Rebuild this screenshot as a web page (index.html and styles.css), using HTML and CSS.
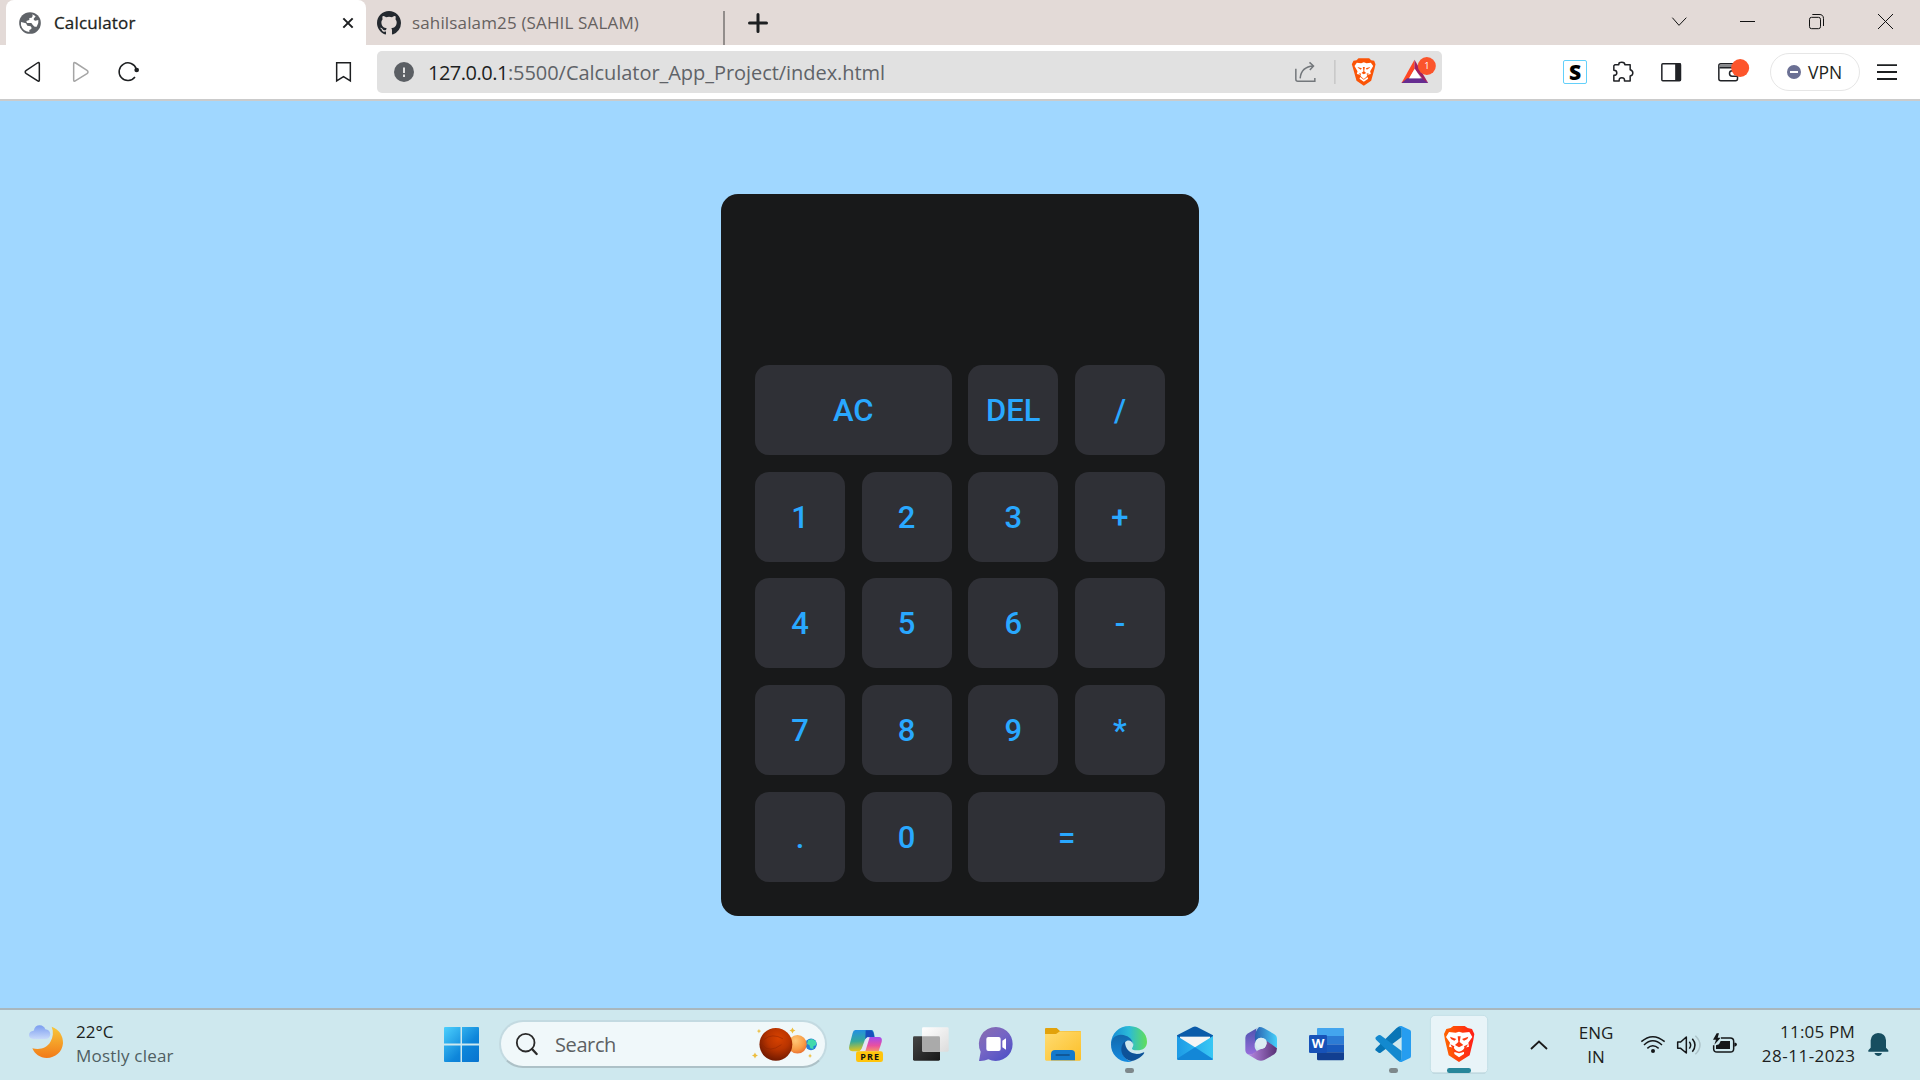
FILE: index.html
```html
<!DOCTYPE html>
<html lang="en">
<head>
<meta charset="utf-8">
<title>Calculator</title>
<link rel="stylesheet" href="styles.css">
</head>
<body>
<header class="tabs">
  <div class="tab active">
    <svg class="favicon" viewBox="57 36 66 66"><circle cx="90" cy="69" r="32.500" fill="#5f6368"/><path d="M63 66 78 70 82 77 92 79Q96 82 94 87L88 90V96Q68 94 63 76ZM97 43Q100 48 95 53L88 54V60L79 63 81 69 94 69 99 76 104 80 110 80Q117 71 115 60L106 62Q100 61 101 56L107 49Z" fill="#fff"/></svg>
    <span class="tab-title">Calculator</span>
    <svg class="tab-close" viewBox="1026 50 36 36"><path d="M1030 54 1058 82M1058 54 1030 82" stroke="#1d1f21" stroke-width="6"/></svg>
  </div>
  <div class="tab idle">
    <svg class="github" viewBox="0 0 16 16"><path fill="#24292f" d="M8 0C3.580 0 0 3.580 0 8c0 3.540 2.290 6.530 5.470 7.590.4.070.55-.17.55-.38 0-.19-.01-.82-.01-1.490-2.010.37-2.530-.49-2.690-.94-.09-.23-.48-.94-.82-1.130-.28-.15-.68-.52-.01-.53.63-.01 1.080.58 1.230.82.72 1.210 1.870.87 2.330.66.07-.52.28-.87.51-1.070-1.780-.2-3.640-.89-3.640-3.950 0-.87.31-1.590.82-2.150-.08-.2-.36-1.020.08-2.120 0 0 .67-.21 2.200.82a7.600 7.600 0 0 1 4 0c1.530-1.040 2.200-.82 2.200-.82.44 1.100.16 1.920.08 2.120.51.56.82 1.270.82 2.150 0 3.070-1.870 3.750-3.650 3.950.29.25.54.73.54 1.480 0 1.070-.01 1.930-.01 2.200 0 .21.15.46.55.38A8 8 0 0 0 16 8c0-4.420-3.580-8-8-8Z"/></svg>
    <span class="tab-title">sahilsalam25 (SAHIL SALAM)</span>
  </div>
  <svg class="plus" viewBox="0 0 20 20"><path d="M10 1.500V18.500M1.500 10H18.500" stroke="#1d1f21" stroke-width="3" stroke-linecap="round"/></svg>
  <svg class="window-controls" viewBox="393 0 747 135" fill="none" stroke="#111" stroke-width="3"><path d="M397 53 417 76 439 53M600 64.500H645M1014 42 1059 87M1059 42 1014 87"/><rect x="808.500" y="52" width="33" height="34" rx="6"/><path d="M817 43.500H837Q850.500 43 850.500 56V78"/></svg>
</header>
<nav class="toolbar">
  <svg class="nav-buttons" viewBox="66 135 360 162" fill="none" stroke="#1d1f21" stroke-width="4.500" stroke-linejoin="round"><path d="M118 191V240Q118 246 112 242L79 221Q72 216 79 211L112 189Q118 185 118 191Z"/><path d="M221 191V240Q221 246 227 242L261 221Q267 216 261 211L227 189Q221 185 221 191Z" stroke="#a5a5a5"/><path d="M405 231A26.500 26.500 0 1 1 409 207"/><circle cx="410" cy="210" r="7" fill="#1d1f21" stroke="none"/></svg>
  <svg class="bookmark" viewBox="1005 183 51 66"><path d="M1010 188H1051V243L1030.500 230 1010 243Z" fill="none" stroke="#1d1f21" stroke-width="4.500"/></svg>
  <div class="address">
    <svg class="info" viewBox="0 0 20 20"><circle cx="10" cy="10" r="10" fill="#5b5f64"/><path d="M10 5.500V11M10 12.500V15" stroke="#e1e1e1" stroke-width="2"/></svg>
    <span class="url"><b>127.0.0.1</b>:5500/Calculator_App_Project/index.html</span>
    <svg class="address-icons" viewBox="160 135 440 162">
      <path d="M168 206V238Q168 244 174 244H225V234M181 235Q184 200 221 198M209 187 221 198 210 210" fill="none" stroke="#73777b" stroke-width="4.500"/>
      <path d="M285 180V252" stroke="#c9c9c9" stroke-width="5"/>
      <path d="M350 181 356 175H388L394 181 403 182 407 193 404 206 394 242 372 257 350 242 340 206 336 193 341 182Z" fill="#fb5407"/>
      <path d="M351 188 364 190 372 187 380 190 393 188 400 198 391 214 393 222 383 224 380 230 372 237 364 230 361 224 351 222 353 214 344 198ZM372 239 383 231 385 236 372 245 359 236 361 231Z" fill="#fff"/>
      <path d="M353 201 366 205 363 209 355 204ZM391 201 378 205 381 209 389 204ZM369 201H375L373 214 379 219 372 223 365 219 371 214ZM357 219 364 221 362 226ZM387 219 380 221 382 226Z" fill="#fb5407"/>
      <path d="M524 179 485 249H500L524 207Z" fill="#ff4724"/><path d="M485 249H565L550 235H502Z" fill="#662d91"/><path d="M524 179 565 249 548 237 524 207Z" fill="#9e1f63"/><path d="M525 206 508 235H542Z" fill="#fff"/>
      <circle cx="561" cy="198" r="27" fill="#fb542b"/><text x="561" y="208" text-anchor="middle" font-size="28" fill="#fff" font-family="Open Sans, sans-serif">1</text>
    </svg>
  </div>
  <span class="extension">S</span>
  <svg class="extension-icons" viewBox="210 135 425 162" fill="none" stroke="#202226" stroke-width="4.500">
    <path d="M224 194H236V192Q236 187 245 187 254 187 254 194H270V209Q278 211 278 219 278 226 270 228V243H253Q254 233 245 233 236 233 237 243H221V226Q230 226 230 219 230 211 221 211V197Z" stroke-linejoin="round"/>
    <rect x="365" y="191" width="56" height="51" rx="3"/><path d="M405 190H422V243H405Z" fill="#202226" stroke="none"/>
    <rect x="536" y="191" width="56" height="51" rx="6"/><path d="M538 194H580V203H538Z" fill="#85878a" stroke="none"/><path d="M538 203H590M592 212H576Q568 212 568 220 568 229 576 229H592"/><circle cx="600" cy="204" r="27" fill="#fd552b" stroke="none"/>
  </svg>
  <div class="vpn"><svg viewBox="0 0 14 14"><circle cx="7" cy="7" r="7" fill="#6b7094"/><path d="M3 7H11" stroke="#fff" stroke-width="2"/></svg><span>VPN</span></div>
  <svg class="hamburger" viewBox="0 0 20 16"><path d="M0 1.200H20M0 8H20M0 15H20" stroke="#1d1f21" stroke-width="1.800"/></svg>
</nav>
<main class="page">
  <section class="calculator">
    <div class="display"></div>
    <div class="keys">
      <button class="wide">AC</button><button>DEL</button><button>/</button>
      <button>1</button><button>2</button><button>3</button><button>+</button>
      <button>4</button><button>5</button><button>6</button><button>-</button>
      <button>7</button><button>8</button><button>9</button><button>*</button>
      <button>.</button><button>0</button><button class="wide">=</button>
    </div>
  </section>
</main>
<footer class="taskbar">
  <svg class="weather-icon" viewBox="84 69 108 108">
    <defs><linearGradient id="moon" x2="0" y2="1"><stop stop-color="#f8c83a"/><stop offset="1" stop-color="#f27a18"/></linearGradient><linearGradient id="cloud" x2="0" y2="1"><stop stop-color="#7b9df0"/><stop offset="1" stop-color="#c8dafa"/></linearGradient></defs>
    <path d="M155 80C178 88 190 108 189 130 187 156 166 174 140 174 120 174 104 162 97 145 120 150 140 145 151 126 160 111 161 95 155 80Z" fill="url(#moon)"/><path d="M100 117Q87 116 87 105 88 93 101 92 105 76 119 76 132 77 136 88 150 89 151 103 150 117 136 117Z" fill="url(#cloud)"/>
  </svg>
  <div class="weather"><span class="temp">22°C</span><span class="sky">Mostly clear</span></div>
  <svg class="start" viewBox="0 0 35 35"><defs><linearGradient id="win" gradientUnits="userSpaceOnUse" x2="35" y2="35"><stop stop-color="#4cd0fd"/><stop offset=".6" stop-color="#0e86da"/><stop offset="1" stop-color="#0873cf"/></linearGradient></defs><path d="M1 0H16.500V16.500H0V1Q0 0 1 0ZM18 0H34Q35 0 35 1V16.500H18ZM0 18.500H16.500V35H1Q0 35 0 34ZM18 18.500H35V34Q35 35 34 35H18Z" fill="url(#win)"/></svg>
  <div class="search">
    <svg class="lens" viewBox="288 96 72 72" fill="none" stroke="#2a2a2a"><circle cx="320" cy="128" r="26.500" stroke-width="5.500"/><path d="M339 147 353 162" stroke-width="7" stroke-linecap="round"/></svg>
    <span>Search</span>
    <svg class="planets" viewBox="996 78 202 108">
      <defs><radialGradient id="mars" cx=".58" cy=".32" r=".75"><stop stop-color="#d84200"/><stop offset=".45" stop-color="#b93400"/><stop offset="1" stop-color="#651500"/></radialGradient><radialGradient id="venus" cx=".4" cy=".3" r=".8"><stop stop-color="#ffc877"/><stop offset=".6" stop-color="#f89c45"/><stop offset="1" stop-color="#e5622a"/></radialGradient></defs>
      <circle cx="1177" cy="133" r="17.500" fill="#237fd6"/><path d="M1168 121 1180 117 1192 124 1193 135 1184 139 1184 147 1175 145 1172 135 1165 132Z" fill="#42d9ac"/><circle cx="1136" cy="133" r="28" fill="url(#venus)"/><circle cx="1071" cy="133" r="49.500" fill="url(#mars)"/><path d="M1036 118Q1060 98 1092 116M1032 136Q1050 160 1088 134" fill="none" stroke="#8f2500" stroke-width="3" opacity=".5"/>
      <path d="M1020 86 1022 91 1027 93 1022 95 1020 100 1018 95 1013 93 1018 91ZM1121 82 1124 88 1130 91 1124 94 1121 100 1118 94 1112 91 1118 88ZM1008 158 1011 164 1017 167 1011 170 1008 176 1005 170 999 167 1005 164ZM1174 161 1176 166 1180 168 1176 170 1174 174 1172 170 1168 168 1172 166Z" fill="#edbd3d"/>
    </svg>
  </div>
  <div class="apps">
    <svg viewBox="9 30 198 210"><defs><linearGradient id="cp1" x2=".1" y2="1"><stop stop-color="#218de7"/><stop offset=".55" stop-color="#35a99c"/><stop offset="1" stop-color="#e3c61b"/></linearGradient><linearGradient id="cp2" x2="0" y2="1"><stop stop-color="#a34af0"/><stop offset=".6" stop-color="#e950a0"/><stop offset="1" stop-color="#f79368"/></linearGradient></defs><path d="M76 90H126Q132 91 134 112H116Q107 112 104 121L95 146Q92 154 83 154H67Q54 152 58 137L68 99Q70 90 76 90Z" fill="url(#cp1)"/><path d="M107 91H124Q131 94 133 112H116Q109 112 106 117Z" fill="#174fbd"/><path d="M117 111H148Q158 113 155 126L146 154H98Z" fill="url(#cp2)"/><path d="M111 112H119L106 154H88Q94 151 97 143Z" fill="#e6e4f4"/><rect x="78" y="154" width="81" height="32" rx="7" fill="#ffc40b"/><text x="119" y="180" text-anchor="middle" font-size="27" font-weight="700" fill="#111" textLength="57" font-family="Open Sans, sans-serif">PRE</text></svg>
    <svg viewBox="207 30 198 210"><defs><linearGradient id="tv" x2="1" y2="1"><stop stop-color="#454545"/><stop offset="1" stop-color="#171717"/></linearGradient><linearGradient id="tv2" x2="1" y2="1"><stop stop-color="#fff"/><stop offset="1" stop-color="#dcdcdc"/></linearGradient></defs><rect x="249" y="109" width="81" height="73" rx="4" fill="url(#tv)"/><rect x="276" y="82" width="80" height="73" rx="4" fill="url(#tv2)"/><path d="M276 109H326Q330 109 330 113V155H280Q276 155 276 151Z" fill="#aaa"/></svg>
    <svg viewBox="405 30 198 210"><defs><linearGradient id="chat" x2=".8" y2="1"><stop stop-color="#8a6dae"/><stop offset=".5" stop-color="#7565c4"/><stop offset="1" stop-color="#4e50c6"/></linearGradient></defs><path d="M498 81A51 51 0 1 1 475 178Q462 184 447 183L452 155A51 51 0 0 1 498 81Z" fill="url(#chat)"/><rect x="469" y="111" width="43" height="42" rx="6" fill="#fff"/><path d="M517 122 528 115V149L517 142Z" fill="#fff"/></svg>
    <svg viewBox="603 30 198 210"><defs><linearGradient id="folder" x2="1" y2="1"><stop stop-color="#ffdc72"/><stop offset="1" stop-color="#fcbf28"/></linearGradient></defs><path d="M648 84H680L690 93H749Q753 93 753 97V112H645V87Q645 84 648 84Z" fill="#e2a20b"/><path d="M645 102H678L690 94H753V178Q753 182 749 182H649Q645 182 645 178Z" fill="url(#folder)"/><path d="M663 181V161Q664 150 675 150H724Q735 150 735 161V181Z" fill="#1479cb"/><path d="M677 165H719" stroke="#10528e" stroke-width="5"/></svg>
    <svg viewBox="801 30 198 210"><defs><linearGradient id="e1"><stop stop-color="#168bd6"/><stop offset=".5" stop-color="#2bbbd7"/><stop offset="1" stop-color="#62de58"/></linearGradient><linearGradient id="e2" x2="0" y2="1"><stop stop-color="#1268ac"/><stop offset="1" stop-color="#148be0"/></linearGradient></defs><path d="M843 132C844 99 867 78 898 78 928 79 951 99 951 125 951 142 939 151 922 151 911 151 903 148 907 143 915 133 907 118 890 117Q857 113 843 132Z" fill="url(#e1)"/><path d="M843 133C845 108 867 98 889 108 901 112 909 123 908 133 907 123 894 116 884 128 866 152 884 183 908 184 872 193 842 166 843 133Z" fill="url(#e2)"/><path d="M885 124C864 142 875 178 903 183 921 181 937 169 943 158Q942 156 938 158C913 169 884 155 885 124Z" fill="#0d5298"/><rect x="885" y="204" width="27" height="15" rx="7" fill="#7e888b"/></svg>
    <svg viewBox="9 30 198 210"><defs><linearGradient id="mail"><stop stop-color="#1d9be6"/><stop offset="1" stop-color="#39c7f4"/></linearGradient></defs><path d="M51 106 99 81Q105 78 111 81L159 106V140H51Z" fill="#0b5ba9"/><path d="M60 110H150V145H60Z" fill="#f5f5f5"/><path d="M51 108 105 142 159 108V176Q159 180 155 180H55Q51 180 51 176Z" fill="url(#mail)"/><path d="M105 142 159 177Q158 180 155 180H55L51 176Z" fill="#1387d7"/></svg>
    <svg viewBox="207 30 198 210"><defs><linearGradient id="m1" x2="0" y2="1"><stop stop-color="#4a52ad"/><stop offset="1" stop-color="#986edb"/></linearGradient><linearGradient id="m2"><stop stop-color="#2a5eae"/><stop offset="1" stop-color="#46d0fb"/></linearGradient><linearGradient id="m3"><stop stop-color="#b98ae5"/><stop offset="1" stop-color="#573075"/></linearGradient></defs><path d="M297 81 262 101Q256 105 256 113V151Q257 163 268 164 278 166 291 154 279 143 287 121L289 86Z" fill="url(#m1)"/><path d="M297 81Q303 80 312 85L342 102Q351 107 351 117V144L321 129Q321 114 303 113 288 115 287 130 279 100 297 81Z" fill="url(#m2)"/><path d="M320 123 351 145Q351 157 343 163L313 180Q303 185 292 180L263 163Q273 167 290 153L303 147Q320 146 320 123Z" fill="url(#m3)"/><circle cx="303" cy="130" r="17" fill="#dcedf3"/></svg>
    <svg viewBox="405 30 198 210"><path d="M474 84H549Q552 84 552 88V109H471V87Q471 84 474 84Z" fill="#43a5ee"/><path d="M471 108H552V133H471Z" fill="#2c7bd4"/><path d="M471 133H552V157H471Z" fill="#185abd"/><path d="M471 157H552V177Q552 181 548 181H475Q471 181 471 177Z" fill="#123f91"/><rect x="447" y="105" width="54" height="54" rx="4" fill="#1752b8"/><text x="474" y="145" text-anchor="middle" font-size="37" font-weight="700" fill="#fff" textLength="38" lengthAdjust="spacingAndGlyphs" font-family="Open Sans, sans-serif">W</text></svg>
    <svg viewBox="603 30 198 210"><path d="M648 145 709 85Q716 78 725 79V111L662 158Q657 160 653 156L646 151Q645 148 648 145Z" fill="#0875b6"/><path d="M648 119 709 178Q716 186 725 186V153L662 106Q657 103 653 107L647 112Q645 116 648 119Z" fill="#1389cf"/><path d="M716 81Q720 77 726 79L750 90Q753 92 753 96V168Q753 173 750 174L726 185Q720 187 716 183 725 181 725 171V93Q725 83 716 81Z" fill="#269df0"/><rect x="687" y="204" width="27" height="15" rx="7" fill="#7e888b"/></svg>
    <svg viewBox="801 30 198 210"><defs><linearGradient id="lion"><stop stop-color="#ff6500"/><stop offset="1" stop-color="#ff1e18"/></linearGradient></defs><rect x="811" y="46" width="172" height="174" rx="14" fill="#e8f4f8" stroke="#c3dfe6" stroke-width="3"/><path d="M818 219H976" stroke="#b9d2d9" stroke-width="3"/><path d="M872 84 880 78H914L923 84 936 87 943 102 940 120 929 166 897 186 866 166 855 120 852 102 859 87Z" fill="url(#lion)"/><path d="M867 96 887 98 897 95 908 98 928 96 937 111 925 128 927 140 914 143 908 151 897 158 887 151 881 143 867 140 870 128 858 111ZM897 151 912 156V162L897 172 883 162V156Z" fill="#fff"/><path d="M870 110 889 117 883 122 873 117ZM925 110 906 117 912 122 922 117ZM893 109H902L899 126 910 135 897 142 885 135 895 126ZM871 133 883 139 880 149ZM924 133 912 139 915 149ZM881 149 897 155 914 149V155L897 160 881 155Z" fill="#fd3b12"/><rect x="861" y="204" width="72" height="15" rx="7" fill="#27869a"/></svg>
  </div>
  <svg class="chevron" viewBox="0 0 18 10"><path d="M1 9 9 1.500 17 9" fill="none" stroke="#1a1a1a" stroke-width="1.800"/></svg>
  <div class="language"><span>ENG</span><span>IN</span></div>
  <svg class="status" viewBox="450 90 294 78" fill="none" stroke="#141719" stroke-width="4.500">
    <path d="M454 122Q488 92 524 122M462 132Q488 107 516 132M472 142Q488 127 506 142"/><circle cx="489" cy="150" r="6" fill="#141719" stroke="none"/>
    <path d="M563 123H572L589 108V156L572 142H563Z" stroke-linejoin="round"/><path d="M598 122Q606 132 598 143M607 113Q623 132 607 152"/><path d="M616 104Q644 132 616 160" stroke="#adc4ca"/>
    <path d="M693 111H721Q731 111 731 121V143Q731 153 721 153H681Q671 153 671 143V133"/><path d="M692 120H720V144H678V133L687 130ZM733 125H737Q741 127 741 131 740 136 733 137Z" fill="#141719" stroke="none"/><path d="M680 97 669 116H678L673 131 692 110H683L687 97Z" fill="#141719" stroke="none"/>
  </svg>
  <div class="clock"><span class="time">11:05 PM</span><span class="date">28-11-2023</span></div>
  <svg class="bell" viewBox="1133 96 63 75"><path d="M1134 155V151L1141 143V121Q1143 101 1163 99 1186 100 1187 121V143L1194 151V155ZM1152 159H1175Q1172 168 1163 168 1155 167 1152 159Z" fill="#174e60"/></svg>
</footer>
</body>
</html>
```
FILE: styles.css
```css
* { box-sizing: border-box; }
body { margin: 0; width: 1920px; height: 1080px; overflow: hidden; display: flex; flex-direction: column; font-family: "Open Sans", "Noto Sans", sans-serif; color: #1d1f21; background: #a0d7ff; }
svg { display: block; flex: none; }
span { white-space: nowrap; }

.tabs { height: 45px; display: flex; align-items: center; background: #e3dad7; padding-left: 6px; }
.tab { height: 45px; display: flex; align-items: center; font-size: 17px; letter-spacing: .15px; }
.active { width: 360px; padding: 0 12px 0 13px; border-radius: 8px 8px 0 0; background: #fff; }
.favicon { width: 22px; height: 22px; }
.active .tab-title { flex: 1; margin-left: 13px; -webkit-text-stroke: .3px #1d1f21; }
.tab-close { width: 12px; height: 12px; }
.idle { width: 358px; padding-left: 11px; gap: 11px; color: #66615f; position: relative; }
.idle::after { content: ""; position: absolute; right: -1px; top: 11px; width: 2px; height: 34px; background: #928d8b; }
.github { width: 24px; height: 24px; }
.plus { width: 20px; height: 20px; margin-left: 23.500px; }
.window-controls { width: 249px; height: 45px; margin-left: auto; }

.toolbar { height: 56px; display: flex; align-items: center; padding: 0 23px 0 22px; background: #fff; border-bottom: 2px solid #cbcbcb; }
.nav-buttons { width: 120px; height: 54px; }
.bookmark { width: 17px; height: 22px; margin-left: 193px; }
.address { width: 1065px; height: 42px; margin-left: 25px; padding-left: 17px; border-radius: 5px; background: #e1e1e1; display: flex; align-items: center; }
.info { width: 20px; height: 20px; }
.url { flex: 1; margin-left: 14px; font-size: 20px; letter-spacing: -.05px; color: #5f6368; }
.url b { font-weight: 400; letter-spacing: -.5px; color: #1d1f21; }
.address-icons { width: 147px; height: 54px; margin-right: 2px; }
.extension { width: 24px; height: 24px; margin-left: 121px; border: 1px solid #63d0fa; border-radius: 2px; display: flex; align-items: center; justify-content: center; font: 800 21px/22px "Open Sans", sans-serif; color: #000; }
.extension-icons { width: 142px; height: 54px; margin-left: 23px; }
.vpn { width: 90px; height: 38px; margin-left: 18px; padding-left: 16px; gap: 7px; border: 1px solid #e6e6e6; border-radius: 19px; display: flex; align-items: center; font-size: 17.500px; }
.vpn svg { width: 14px; height: 14px; }
.hamburger { width: 20px; height: 16px; margin-left: 17px; }

.page { flex: 1; display: flex; justify-content: center; align-items: flex-start; padding-top: 93px; }
.calculator { width: 478px; height: 722px; padding: 34px; border-radius: 17px; background: #18191a; }
.display { height: 137px; }
.keys { display: grid; grid-template-columns: repeat(4, 90px); grid-auto-rows: 90px; gap: 16.670px; }
.keys button { border: 0; border-radius: 14px; padding: 1px 0 0; background: #2f3036; color: #29a8ff; font: 500 31px/37px Roboto, sans-serif; }
.keys .wide { grid-column: span 2; }

.taskbar { height: 72px; border-top: 2px solid #a9b7bd; display: flex; align-items: center; background: #cee8ee; padding-left: 28px; }
.weather-icon { width: 36px; height: 36px; margin-top: -8px; }
.weather, .language, .clock { display: flex; flex-direction: column; font-size: 17px; line-height: 24px; }
.weather { width: 110px; margin-left: 12px; margin-top: -3px; }
.sky { letter-spacing: .2px; color: #4f5e62; }
.start { width: 35px; height: 35px; margin-left: 258px; margin-top: -1px; }
.search { width: 328px; height: 48px; margin: -2px 0 0 20px; padding-left: 15px; border: 2px solid #c3dae1; border-bottom-color: #adc1c7; border-radius: 24px; background: #f0f8fa; display: flex; align-items: center; font-size: 20px; letter-spacing: -.4px; color: #5d6163; }
.lens { width: 24px; height: 24px; margin-right: 16px; margin-left: -1px; }
.planets { width: 67px; height: 36px; margin-left: auto; margin-right: 7px; }
.apps { display: flex; margin-left: 6px; }
.apps svg { width: 66px; height: 70px; }
.chevron { width: 18px; height: 10px; margin-left: 37px; }
.language { width: 50px; margin-left: 23px; margin-top: 0; align-items: center; }
.status { width: 98px; height: 26px; margin-left: 19px; margin-top: -3px; }
.clock { width: 100px; align-items: flex-end; margin-left: 17px; margin-top: -3px; }
.time { letter-spacing: .2px; }
.date { letter-spacing: .5px; margin-right: -.5px; }
.bell { width: 21px; height: 25px; margin-left: 13px; margin-top: -1px; }
```
